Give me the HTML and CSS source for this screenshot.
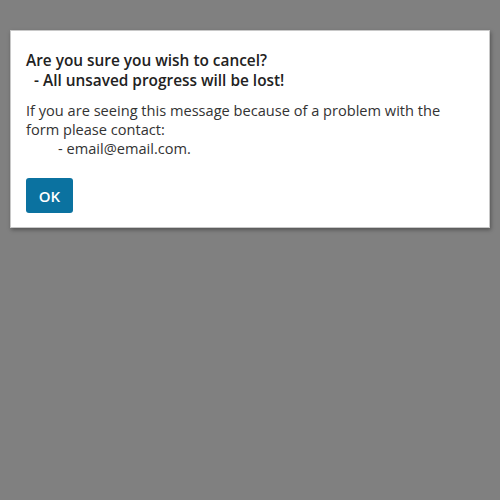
FILE: index.html
```html
<!DOCTYPE html>
<html>
<head>
<meta charset="utf-8">
<link rel="stylesheet" href="styles.css">
</head>
<body>
<div class="dialog">
  <h2 class="title">Are you sure you wish to cancel?<br><span class="sub">- All unsaved progress will be lost!</span></h2>
  <p class="msg">If you are seeing this message because of a problem with the form please contact:<br><span class="email">- email@email.com.</span></p>
  <button class="ok">OK</button>
</div>
</body>
</html>
```
FILE: styles.css
```css
html, body {
  margin: 0;
  padding: 0;
  height: 100%;
  background: #808080;
}
body {
  font-family: "Open Sans", sans-serif;
  color: #333;
  padding: 30px 10px 0 10px;
  box-sizing: border-box;
}
.dialog {
  background: #fff;
  border: 1px solid #c8c8c8;
  box-shadow: 1px 2px 4px rgba(0,0,0,0.35);
  padding: 20px 15px 14px 15px;
  width: 480px;
  box-sizing: border-box;
}
.title {
  margin: 0;
  font-size: 15.4px;
  font-weight: 600;
  line-height: 20px;
  color: #222;
}
.sub {
  padding-left: 8px;
}
.msg {
  margin: 10px 0 20px 0;
  font-size: 14.6px;
  line-height: 19px;
  color: #333;
}
.email {
  padding-left: 32px;
}
.ok {
  background: #0b72a0;
  color: #fff;
  border: none;
  border-radius: 3px;
  width: 47px;
  height: 35px;
  font-family: "Open Sans", sans-serif;
  font-size: 15px;
  font-weight: 600;
  padding: 0;
  display: block;
}
```
